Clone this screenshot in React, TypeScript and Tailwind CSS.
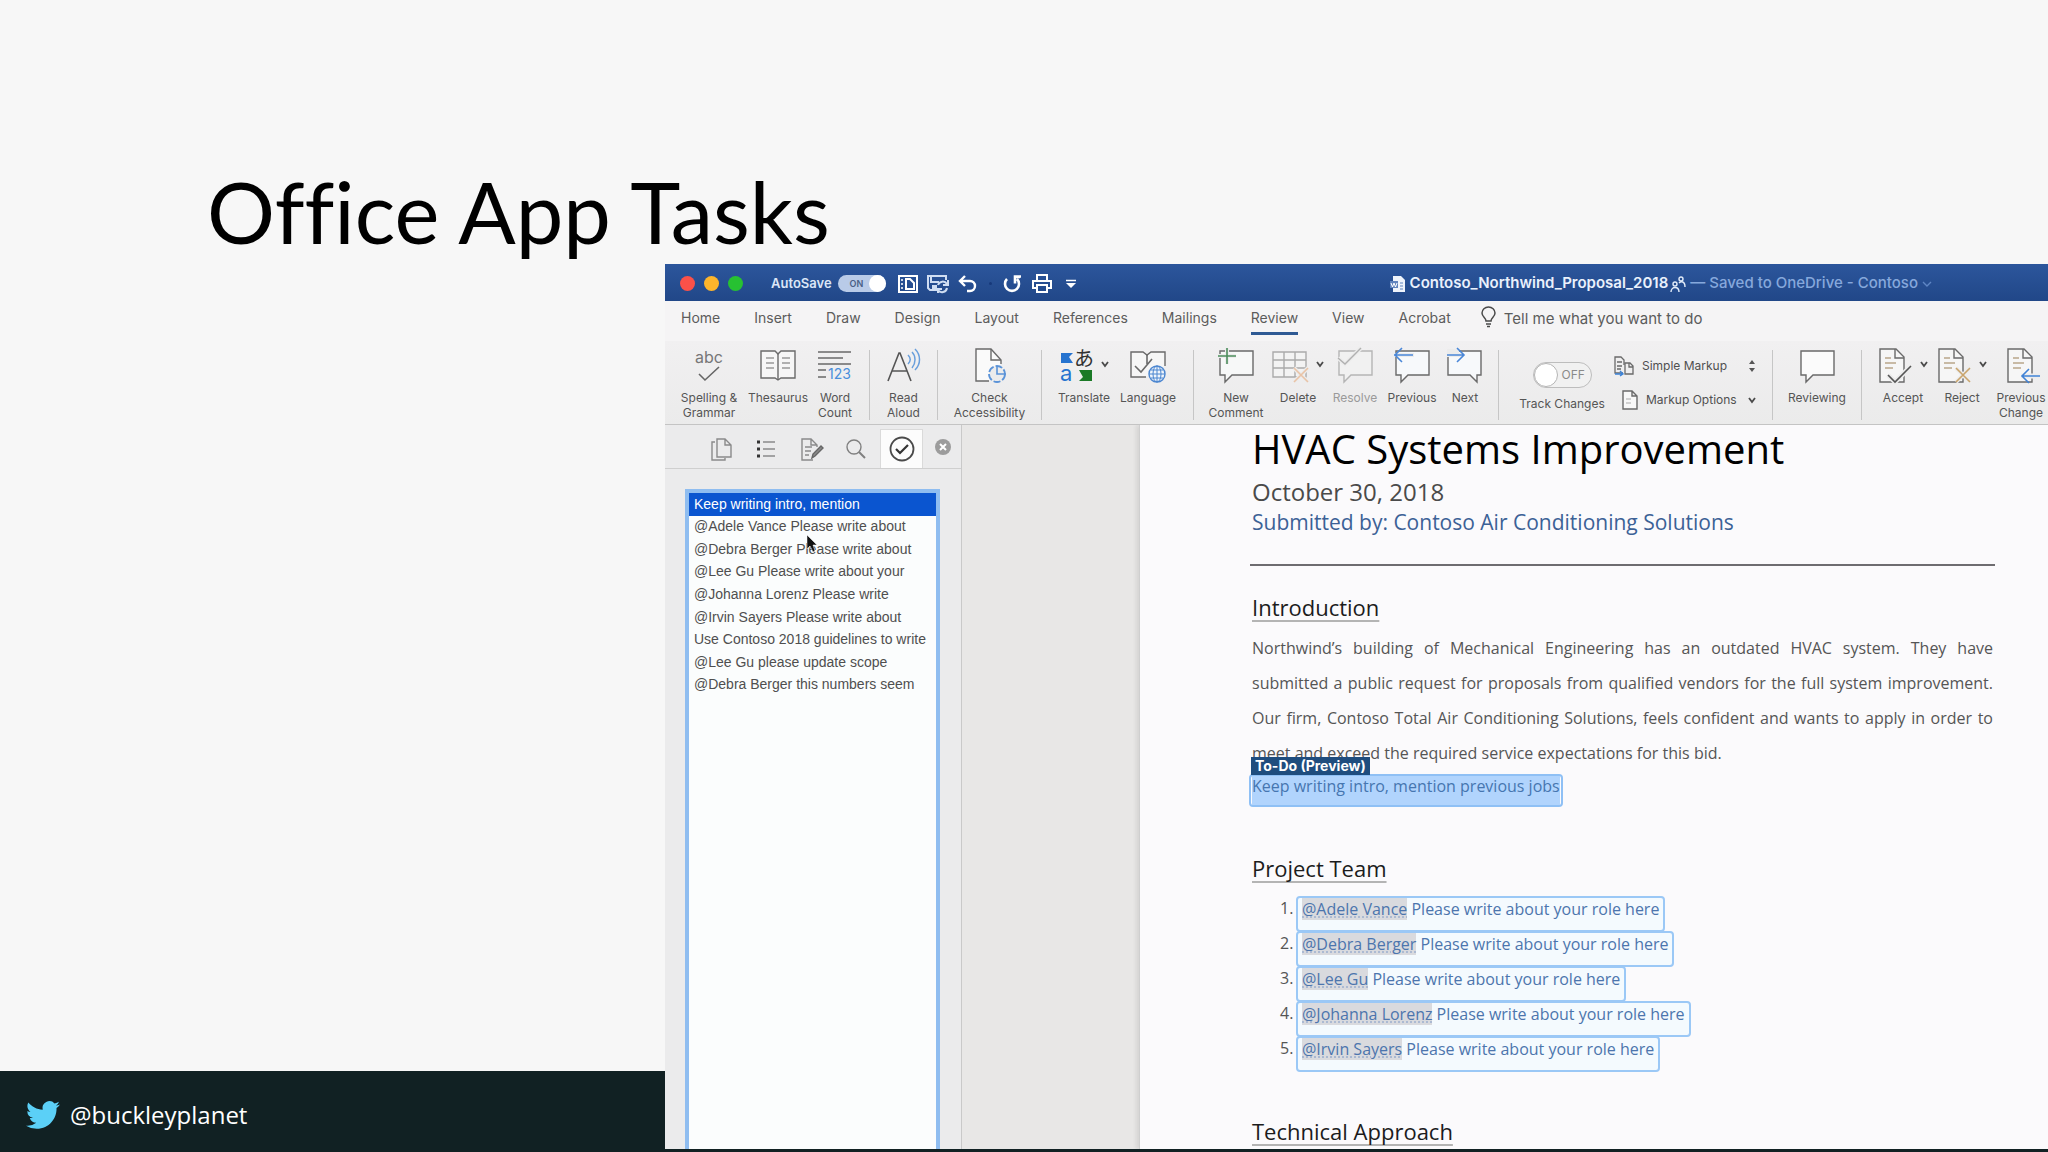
import React from "react";

const tabs = ["Home", "Insert", "Draw", "Design", "Layout", "References", "Mailings", "Review", "View", "Acrobat"];

const tasks = [
  "Keep writing intro, mention",
  "@Adele Vance Please write about",
  "@Debra Berger Please write about",
  "@Lee Gu Please write about your",
  "@Johanna Lorenz Please write",
  "@Irvin Sayers Please write about",
  "Use Contoso 2018 guidelines to write",
  "@Lee Gu please update scope",
  "@Debra Berger this numbers seem",
];

const team = ["@Adele Vance", "@Debra Berger", "@Lee Gu", "@Johanna Lorenz", "@Irvin Sayers"];

const introLines = [
  "Northwind’s building of Mechanical Engineering has an outdated HVAC system. They have",
  "submitted a public request for proposals from qualified vendors for the full system improvement.",
  "Our firm, Contoso Total Air Conditioning Solutions, feels confident and wants to apply in order to",
];

const Svg = ({ w = 36, h = 36, children }: { w?: number; h?: number; children: React.ReactNode }) => (
  <svg width={w} height={h} viewBox={`0 0 ${w} ${h}`} fill="none" stroke="#6a6a6a" strokeWidth="1.4" className="shrink-0 overflow-visible">
    {children}
  </svg>
);

const Chevron = () => (
  <Svg w={8} h={6}>
    <path d="M1 1l3 4 3-4" stroke="#4a4a4a" strokeWidth="1.8" />
  </Svg>
);

const Sep = () => <div className="my-1 w-px shrink-0 bg-[#c6c6c6]" />;

type ToolProps = {
  width: string;
  label: string;
  label2?: string;
  faded?: boolean;
  menu?: boolean;
  children: React.ReactNode;
};

const Tool = ({ width, label, label2, faded, menu, children }: ToolProps) => (
  <button className={`${width} flex shrink-0 flex-col items-center gap-2 whitespace-nowrap text-[12px] leading-[15px] ${faded ? "text-[#9a9a9a]" : "text-[#555]"}`}>
    <span className="flex items-center gap-2">
      {children}
      {menu && <Chevron />}
    </span>
    <span>
      {label}
      {label2 && (
        <>
          <br />
          {label2}
        </>
      )}
    </span>
  </button>
);

const bubble = "M2 5h33v24H14l-7 7v-7H2z";
const page = "M2 3h16l8 8v25H2z";

const TitleBar = () => (
  <div className="flex h-[37px] shrink-0 items-center overflow-hidden whitespace-nowrap bg-linear-to-b from-[#2c569c] to-[#214788] pt-0.5 pl-[15px] text-[13px] text-white">
    <div className="flex gap-[9px]">
      <button aria-label="Close window" className="size-[15px] rounded-full bg-[#fb5149]" />
      <button aria-label="Minimize window" className="size-[15px] rounded-full bg-[#fdb52b]" />
      <button aria-label="Zoom window" className="size-[15px] rounded-full bg-[#27c132]" />
    </div>
    <span className="ml-7 font-semibold text-[#dbe6f7]">AutoSave</span>
    <button role="switch" aria-checked="true" aria-label="AutoSave" className="ml-1.5 flex h-[17px] w-12 items-center justify-between rounded-full bg-[#b9cbe8] pl-3 text-[9px] font-semibold text-[#4a5f86]">
      ON
      <span className="size-[17px] rounded-full bg-white" />
    </button>

    {/* quick access icons */}
    <div className="ml-3 flex items-center gap-2">
      <button aria-label="Layout">
        <Svg w={20} h={18}>
          <path d="M1 1h18v16H1z" stroke="#fff" strokeWidth="2" />
          <path d="M3 5h2M3 9h2M3 13h2" stroke="#fff" strokeWidth="1.500" />
          <path d="M8 4v10h8V8l-4-4z" stroke="#fff" strokeWidth="2" />
        </Svg>
      </button>
      <button aria-label="Save">
        <Svg w={24} h={19}>
          <path d="M9 16H4l-2-2V2h18v4M5 2v6h8" stroke="#cfddf2" strokeWidth="2" />
          <path d="M6 11h5v6H6z" fill="#cfddf2" stroke="none" />
          <path d="M12 11a5 5 0 0 1 9-1M22 6v5h-5M21 14a5 5 0 0 1-9 2M12 19v-4h4" stroke="#cfddf2" strokeWidth="2" />
        </Svg>
      </button>
      <button aria-label="Undo">
        <Svg w={20} h={18}>
          <path d="M7 1L2 6l5 5M2 6h10a5 5 0 0 1 0 10H9" stroke="#fff" strokeWidth="2.4" />
        </Svg>
      </button>
      <span className="mx-[3px] size-[3px] rounded-full bg-[#17397a]" />
      <button aria-label="Redo">
        <Svg w={20} h={18}>
          <path d="M4 4a7 7 0 1 0 10 0M18 1.500h-6v7M12 2l5 0" stroke="#fff" strokeWidth="2.600" />
        </Svg>
      </button>
      <button aria-label="Print">
        <Svg w={22} h={20}>
          <path d="M6 7V1h10v6M6 14H2V7h18v7h-4M6 11h10v7H6z" stroke="#fff" strokeWidth="2" />
        </Svg>
      </button>
      <button aria-label="Customize" className="ml-1">
        <Svg w={12} h={10}>
          <path d="M1 1.500h10" stroke="#fff" strokeWidth="1.500" />
          <path d="M1 4h10l-5 5z" fill="#fff" stroke="none" />
        </Svg>
      </button>
    </div>

    <div className="ml-[313px] flex items-center text-[15px]">
      <Svg w={16} h={18}>
        <path d="M3 1h8l4 4v12H3z" fill="#eef3fb" stroke="none" />
        <path d="M0 6h8v7H0z" fill="#5f83bd" stroke="none" />
        <path d="M1 8l1.500 4L4 8l1.500 4L7 8" stroke="#fff" strokeWidth="1" />
        <path d="M10 8h3M10 11h3M10 14h3" stroke="#5f83bd" strokeWidth="1" />
      </Svg>
      <span className="ml-1 font-semibold text-[#eaf1fc]">Contoso_Northwind_Proposal_2018</span>
      <span className="ml-0.5">
        <Svg w={16} h={16}>
          <circle cx="5" cy="8" r="2" stroke="#e3ecf9" />
          <path d="M1 16c0-6 8-6 8 0" stroke="#e3ecf9" />
          <circle cx="11" cy="3" r="2" stroke="#e3ecf9" />
          <path d="M9 7c2-2 6-2 6 4" stroke="#e3ecf9" />
        </Svg>
      </span>
      <span className="ml-1 font-medium text-[#86a8dc]">— Saved to OneDrive - Contoso</span>
      <span className="ml-1">
        <Svg w={10} h={6}>
          <path d="M1 1l4 4 4-4" stroke="#5f86c4" />
        </Svg>
      </span>
    </div>
  </div>
);

const TabRow = () => (
  <nav className="flex h-[40px] shrink-0 items-start gap-[34px] overflow-hidden whitespace-nowrap bg-[#f5f4f5] pt-1 pl-4 text-[14px] leading-[26px] text-[#5c5c5c]">
    {tabs.map((t) => (
      <a key={t} href="#" className={t === "Review" ? "border-b-3 border-[#2f5a94] pb-px" : ""}>
        {t}
      </a>
    ))}
    <a href="#" className="-ml-1 flex items-start gap-2 pt-px text-[15px]">
      <Svg w={15} h={22}>
        <path d="M5 15c0-3-4-4-4-8a6.500 6 0 0 1 13 0c0 4-4 5-4 8zM5 18h5M6 20.500h3" stroke="#4a4a4a" strokeWidth="1.500" />
      </Svg>
      Tell me what you want to do
    </a>
  </nav>
);

const Ribbon = () => (
  <div className="flex h-[84px] shrink-0 overflow-hidden border-b border-[#c4c4c4] bg-linear-to-b from-[#f1f0f1] to-[#ebebeb] pt-[5px] pl-[9px]">
    <Tool width="w-[70px]" label="Spelling &" label2="Grammar">
      <Svg>
        <text x="18" y="17" textAnchor="middle" fontSize="16" fill="#777" stroke="none">
          abc
        </text>
        <path d="M8 28l6 6 14-13" stroke="#666" strokeWidth="1.600" />
      </Svg>
    </Tool>
    <Tool width="w-[68px]" label="Thesaurus">
      <Svg>
        <path d="M1 5h14l3 3 3-3h14v27H21l-3 2-3-2H1z" fill="#f6f6f6" />
        <path d="M18 8v26" />
        <path d="M6 12h8M6 17h8M6 22h8M22 12h8M22 17h8M22 22h8" strokeWidth="1.200" />
      </Svg>
    </Tool>
    <Tool width="w-[46px]" label="Word" label2="Count">
      <Svg>
        <path d="M1 6h33M1 12h25M1 18h33M1 24h8M1 31h8" />
        <text x="11" y="33" fontSize="14" fill="#4b8fdb" stroke="none">
          123
        </text>
      </Svg>
    </Tool>
    <div className="w-[11px] shrink-0" />
    <Sep />
    <Tool width="w-[67px]" label="Read" label2="Aloud">
      <Svg>
        <path d="M2 35L13 7h1l11 28M6 25h15" stroke="#555" strokeWidth="1.600" />
        <path d="M22 9c3 3 3 6 0 9M26 6c4 4 4 11 0 16M29 3c6 6 6 15 0 21" stroke="#6a9fdc" strokeWidth="1.500" />
      </Svg>
    </Tool>
    <Sep />
    <Tool width="w-[103px]" label="Check" label2="Accessibility">
      <Svg>
        <path d="M17 35H4V3h15l10 11v4" fill="#fafafa" />
        <path d="M19 3v11h10" />
        <circle cx="25" cy="28" r="8" stroke="#5b93d8" strokeDasharray="7 2" strokeWidth="1.800" fill="#ececec" />
        <path d="M25 20v8h9" stroke="#5b93d8" strokeWidth="1.600" />
      </Svg>
    </Tool>
    <Sep />
    <div className="w-[10px] shrink-0" />
    <Tool width="w-[64px]" label="Translate" menu>
      <Svg w={34}>
        <path d="M2 7h12l-4 4 4 6H2z" fill="#2673cf" stroke="none" />
        <text x="1" y="35" fontSize="22" fill="#2673cf" stroke="none">
          a
        </text>
        <text x="15" y="20" fontSize="20" fill="#333" stroke="none" className="font-['Noto_Sans_CJK_JP',sans-serif]">
          あ
        </text>
        <path d="M20 24h13v11H20l4-4z" fill="#1b7a26" stroke="none" />
      </Svg>
    </Tool>
    <Tool width="w-[64px]" label="Language">
      <Svg>
        <path d="M16 31H1V6h12l4 3 4-3h14v14" fill="#f6f6f6" />
        <path d="M17 9v9M5 20l6 6 11-13" strokeWidth="1.600" />
        <circle cx="27" cy="28" r="8" stroke="#4b86d0" fill="#f0f5fb" />
        <path d="M19 28h16M27 20v16M21 24h12M21 32h12" stroke="#4b86d0" strokeWidth="1" />
        <ellipse cx="27" cy="28" rx="4" ry="8" stroke="#4b86d0" strokeWidth="1" />
      </Svg>
    </Tool>
    <div className="w-[13px] shrink-0" />
    <Sep />
    <div className="w-[11px] shrink-0" />
    <Tool width="w-[62px]" label="New" label2="Comment">
      <Svg>
        <path d={bubble} fill="#f7f8f8" />
        <path d="M0 10h18M9 2v16" stroke="#ececec" strokeWidth="4" />
        <path d="M0 10h18M9 2v16" stroke="#4c8d5c" strokeWidth="1.600" />
      </Svg>
    </Tool>
    <Tool width="w-[62px]" label="Delete" menu>
      <Svg>
        <path d="M1 6h33v25H1zM1 14h33M1 22h33M12 6v25M23 6v25" stroke="#aaa" fill="#f3f3f3" />
        <path d="M22 22l14 14M36 22L22 36" stroke="#ececec" strokeWidth="4" />
        <path d="M22 22l14 14M36 22L22 36" stroke="#e9c3a6" strokeWidth="1.600" />
      </Svg>
    </Tool>
    <Tool width="w-[52px]" label="Resolve" faded>
      <Svg>
        <path d={bubble} stroke="#b5b5b5" fill="#f1f1f1" />
        <path d="M1 12l7 6L24 2" stroke="#ececec" strokeWidth="4" />
        <path d="M1 12l7 6L24 2" stroke="#b0b0b0" />
      </Svg>
    </Tool>
    <Tool width="w-[62px]" label="Previous">
      <Svg>
        <path d={bubble} fill="#f7f9fb" />
        <path d="M0 9h20" stroke="#ececec" strokeWidth="4" />
        <path d="M0 9h19M8 2L1 9l7 7" stroke="#4a87d8" strokeWidth="1.600" />
      </Svg>
    </Tool>
    <Tool width="w-[44px]" label="Next">
      <Svg>
        <path d="M1 5h33v24h-4v7l-7-7H1z" fill="#f7f9fb" />
        <path d="M0 9h16M0 5h12" stroke="#ececec" strokeWidth="4" />
        <path d="M0 9h16M10 2l7 7-7 7" stroke="#4a87d8" strokeWidth="1.600" />
      </Svg>
    </Tool>
    <div className="w-[11px] shrink-0" />
    <Sep />

    {/* track changes */}
    <div className="flex w-[126px] shrink-0 flex-col items-center pt-4 text-[12px] text-[#555]">
      <button role="switch" aria-checked="false" aria-labelledby="track" className="flex h-[26px] w-[59px] items-center gap-1 rounded-full border border-[#bdbdbd] bg-[#f1f1f1] text-[12px] text-[#8a8a8a]">
        <span className="size-6 rounded-full border border-[#b5b5b5] bg-white" />
        OFF
      </button>
      <span id="track" className="mt-2 leading-[15px]">
        Track Changes
      </span>
    </div>
    <div className="-ml-[3px] flex w-[150px] shrink-0 flex-col gap-[14px] pt-[10px] pr-4 text-[12px] leading-5 whitespace-nowrap text-[#505050]">
      <button className="-ml-2 flex items-center gap-2">
        <Svg w={20} h={20}>
          <path d="M9 17H1V1h6l3 3v5M3 6h5M3 10h5M3 13h4" strokeWidth="1.300" />
          <path d="M11 7h5l3 3v8h-8zM15 7v4h4" strokeWidth="1.300" />
          <path d="M1 18h7M6 15l3 3-3 2" stroke="#3b83d8" />
        </Svg>
        Simple Markup
        <span className="ml-auto">
          <Svg w={8} h={14}>
            <path d="M1 5l3-4 3 4zM1 9l3 4 3-4z" fill="#555" stroke="none" />
          </Svg>
        </span>
      </button>
      <button className="flex items-center gap-2">
        <Svg w={16} h={20}>
          <path d="M1 1h9l5 5v13H1zM10 1v5h5" fill="#f8f8f8" />
          <path d="M4 9h5M4 13h5" strokeWidth="1" stroke="#aaa" />
        </Svg>
        Markup Options
        <span className="ml-auto">
          <Chevron />
        </span>
      </button>
    </div>
    <Sep />
    <Tool width="w-[88px]" label="Reviewing">
      <Svg>
        <path d={bubble} fill="#fbfbfb" />
      </Svg>
    </Tool>
    <Sep />
    <div className="w-[10px] shrink-0" />
    <Tool width="w-[62px]" label="Accept" menu>
      <Svg w={34}>
        <path d={page} fill="#f6f6f6" />
        <path d="M17 3v9h9" />
        <path d="M7 12h6M7 17h11M7 22h8" stroke="#b9a68b" />
        <path d="M10 29l7 7 16-16" stroke="#ececec" strokeWidth="5" />
        <path d="M10 29l7 7 16-16" stroke="#555" strokeWidth="1.600" />
      </Svg>
    </Tool>
    <Tool width="w-[56px]" label="Reject" menu>
      <Svg w={34}>
        <path d={page} fill="#f6f6f6" />
        <path d="M17 3v9h9" />
        <path d="M7 12h6M7 17h11M7 22h8" stroke="#b9a68b" />
        <path d="M19 22l14 14M33 22L19 36" stroke="#ececec" strokeWidth="4" />
        <path d="M19 22l14 14M33 22L19 36" stroke="#c9a46c" strokeWidth="1.600" />
      </Svg>
    </Tool>
    <Tool width="w-[62px]" label="Previous" label2="Change">
      <Svg>
        <path d="M5 3h16l8 8v25H5z" fill="#f6f6f6" />
        <path d="M20 3v9h9" />
        <path d="M10 12h6M10 17h11M10 22h8" stroke="#b9a68b" />
        <path d="M18 30h18" stroke="#ececec" strokeWidth="5" />
        <path d="M19 30h18M26 23l-7 7 7 7" stroke="#3f82d6" strokeWidth="1.600" />
      </Svg>
    </Tool>
  </div>
);

const Sidebar = () => (
  <aside className="flex w-[297px] shrink-0 flex-col border-r border-[#c9c9c9] bg-[#ebebec]">
    <div className="flex h-[44px] shrink-0 items-center border-b border-[#cfcfcf] pt-1 pl-[45px]">
      <button aria-label="Thumbnails">
        <Svg w={22} h={24}>
          <path d="M7 2h8l6 6v12H7zM15 2v6h6" stroke="#8a8a8a" />
          <path d="M5 5H2v18h13v-2" stroke="#8a8a8a" />
        </Svg>
      </button>
      <button aria-label="Headings" className="ml-6">
        <Svg w={20} h={20}>
          <path d="M7 3h12M7 10h12M7 17h12" stroke="#8a8a8a" />
          <path d="M1 3h3M1 10h3M1 17h3" stroke="#333" strokeWidth="3" />
        </Svg>
      </button>
      <button aria-label="Changes" className="ml-6">
        <Svg w={24} h={24}>
          <path d="M13 23H2V2h9l6 6v2M11 2v6h6M5 10h7M5 14h6M5 18h4" stroke="#8a8a8a" />
          <path d="M12 21l1-4 8-8 2 2-8 8z" fill="#8a8a8a" stroke="#666" />
        </Svg>
      </button>
      <button aria-label="Find" className="ml-[21px]">
        <Svg w={22} h={22}>
          <circle cx="9" cy="9" r="7" stroke="#808080" />
          <path d="M14 14l6 6" stroke="#808080" strokeWidth="2" />
        </Svg>
      </button>
      <button aria-label="Tasks" className="ml-[13px] flex h-full w-[43px] items-center justify-center border border-b-0 border-[#dadada] bg-[#fcfcfc]">
        <Svg w={26} h={26}>
          <circle cx="13" cy="13" r="11.500" stroke="#4a4a4a" strokeWidth="1.800" />
          <path d="M7 13l4 4 8-8" stroke="#333" strokeWidth="2.200" />
        </Svg>
      </button>
      <button aria-label="Close pane" className="ml-3 mb-1">
        <Svg w={16} h={16}>
          <circle cx="8" cy="8" r="8" fill="#9c9c9c" stroke="none" />
          <path d="M5 5l6 6M11 5l-6 6" stroke="#fff" strokeWidth="2" />
        </Svg>
      </button>
    </div>
    <div className="relative mt-5 mr-[21px] ml-5 flex-1 border-4 border-b-0 border-[#8fbdf0] bg-[#fbfdfd]">
      <ul className="grid h-[203px] auto-rows-fr font-['Liberation_Sans',sans-serif] text-[14px] whitespace-nowrap text-[#4f4f4f]">
        {tasks.map((t, i) => (
          <li key={t} className={i === 0 ? "flex items-center bg-[#0a55d0] pl-[5px] text-white" : "flex items-center pl-[5px]"}>
            {t}
          </li>
        ))}
      </ul>
      {/* mouse pointer */}
      <svg width="12" height="18" viewBox="0 0 12 18" className="absolute top-[42px] left-[117px]">
        <path d="M1 0v14l3-3 3 6 2-1-2-6h4z" fill="#111" stroke="#fff" strokeWidth="0.500" />
      </svg>
    </div>
  </aside>
);

const Heading = ({ children }: { children: React.ReactNode }) => (
  <h3 className="text-[22px] leading-[30px] text-[#1c1c1c] underline decoration-[#b4b4b4] decoration-2 underline-offset-4 [text-decoration-skip-ink:none]">
    {children}
  </h3>
);

const Doc = () => (
  <main className="min-w-0 flex-1 bg-[#e8e7e6] pl-[177px]">
    <article className="h-full border-l border-[#cfcfcf] bg-[#fbfafc] pr-[55px] pl-[112px] font-['Open_Sans',sans-serif] text-[16px] text-[#555] shadow-[-3px_0_4px_rgba(0,0,0,0.08)]">
      <h1 className="text-[40px] leading-[48px] text-black">HVAC Systems Improvement</h1>
      <p className="mt-[3px] text-[24px] leading-[32px] text-[#4a4a4a]">October 30, 2018</p>
      <p className="text-[21px] leading-[28px] text-[#3c6196]">Submitted by: Contoso Air Conditioning Solutions</p>
      <hr className="-mx-0.5 mt-7 border-t-2 border-[#6e6c70]" />

      <div className="mt-[26px]">
        <Heading>Introduction</Heading>
      </div>
      <p className="mt-[9px] leading-[35px]">
        {introLines.map((line) => (
          <span key={line} className="block whitespace-nowrap [text-align-last:justify]">
            {line}
          </span>
        ))}
        meet and exceed the required service expectations for this bid.
      </p>
      <div className="relative mt-[3px] -ml-[3px] w-fit rounded-sm border-2 border-[#8fc0f5] px-px">
        <span className="absolute -top-[19px] left-0 bg-[#1f4d7e] px-1 font-['Inter',sans-serif] text-[14px] leading-[18px] font-bold whitespace-nowrap text-white">
          To-Do (Preview)
        </span>
        <span className="block bg-[#b1d4fd] pb-2 leading-[21px] text-[#4676b0]">Keep writing intro, mention previous jobs</span>
      </div>

      <div className="mt-[46px]">
        <Heading>Project Team</Heading>
      </div>
      <ol className="mt-[14px] ml-7">
        {team.map((name, i) => (
          <li key={name} className="flex leading-[22px]">
            <span className="w-4">{i + 1}.</span>
            <span className="-mt-px h-9 rounded-sm border-2 border-[#9bc8f6] bg-[#f4fafe] px-1 text-[#4c75ad]">
              <a href="#" className="inline-block bg-[#d9dade] underline decoration-[#9db0ce] decoration-dotted underline-offset-2">
                {name}
              </a>{" "}
              Please write about your role here
            </span>
          </li>
        ))}
      </ol>
      <div className="mt-[44px]">
        <Heading>Technical Approach</Heading>
      </div>
    </article>
  </main>
);

const App = () => {
  return (
    <div className="flex min-h-screen flex-col overflow-hidden bg-[#f7f7f7] font-['Inter',sans-serif]">
      <h2 className="h-[264px] pt-[159px] pl-[207px] font-['Lato',sans-serif] text-[85px] leading-[104px] text-black [font-variant-ligatures:none]">Office App Tasks</h2>
      <div className="flex flex-1">
        <div className="flex w-[665px] shrink-0 flex-col">
          <div className="flex-1" />
          <footer className="flex h-[81px] items-center bg-[#112123] pt-1.5 pl-[26px] text-white">
            <svg width="34" height="34" viewBox="0 0 24 24" fill="#5bd0f7">
              <path d="M23.950 4.570a10 10 0 0 1-2.820.770 4.960 4.960 0 0 0 2.160-2.720c-.950.560-2 .960-3.130 1.180a4.920 4.920 0 0 0-8.380 4.480C7.690 8.090 4.070 6.130 1.640 3.160a4.820 4.820 0 0 0-.670 2.480c0 1.710.870 3.210 2.190 4.100a4.900 4.900 0 0 1-2.230-.620v.060a4.920 4.920 0 0 0 3.950 4.830 5 5 0 0 1-2.210.080 4.940 4.940 0 0 0 4.600 3.420A9.870 9.870 0 0 1 0 19.540a14 14 0 0 0 7.550 2.210c9.050 0 14-7.500 14-13.980 0-.210 0-.420-.020-.630a9.940 9.940 0 0 0 2.460-2.550z" />
            </svg>
            <a href="#" className="ml-[10px] font-['Open_Sans',sans-serif] text-[24px]">
              @buckleyplanet
            </a>
          </footer>
        </div>
        <div className="min-w-0 flex-1 bg-[#112123] pb-[3px]">
          <section className="flex h-full flex-col overflow-hidden">
            <TitleBar />
            <TabRow />
            <Ribbon />
            <div className="flex flex-1 overflow-hidden">
              <Sidebar />
              <Doc />
            </div>
          </section>
        </div>
      </div>
    </div>
  );
};

export default App;
